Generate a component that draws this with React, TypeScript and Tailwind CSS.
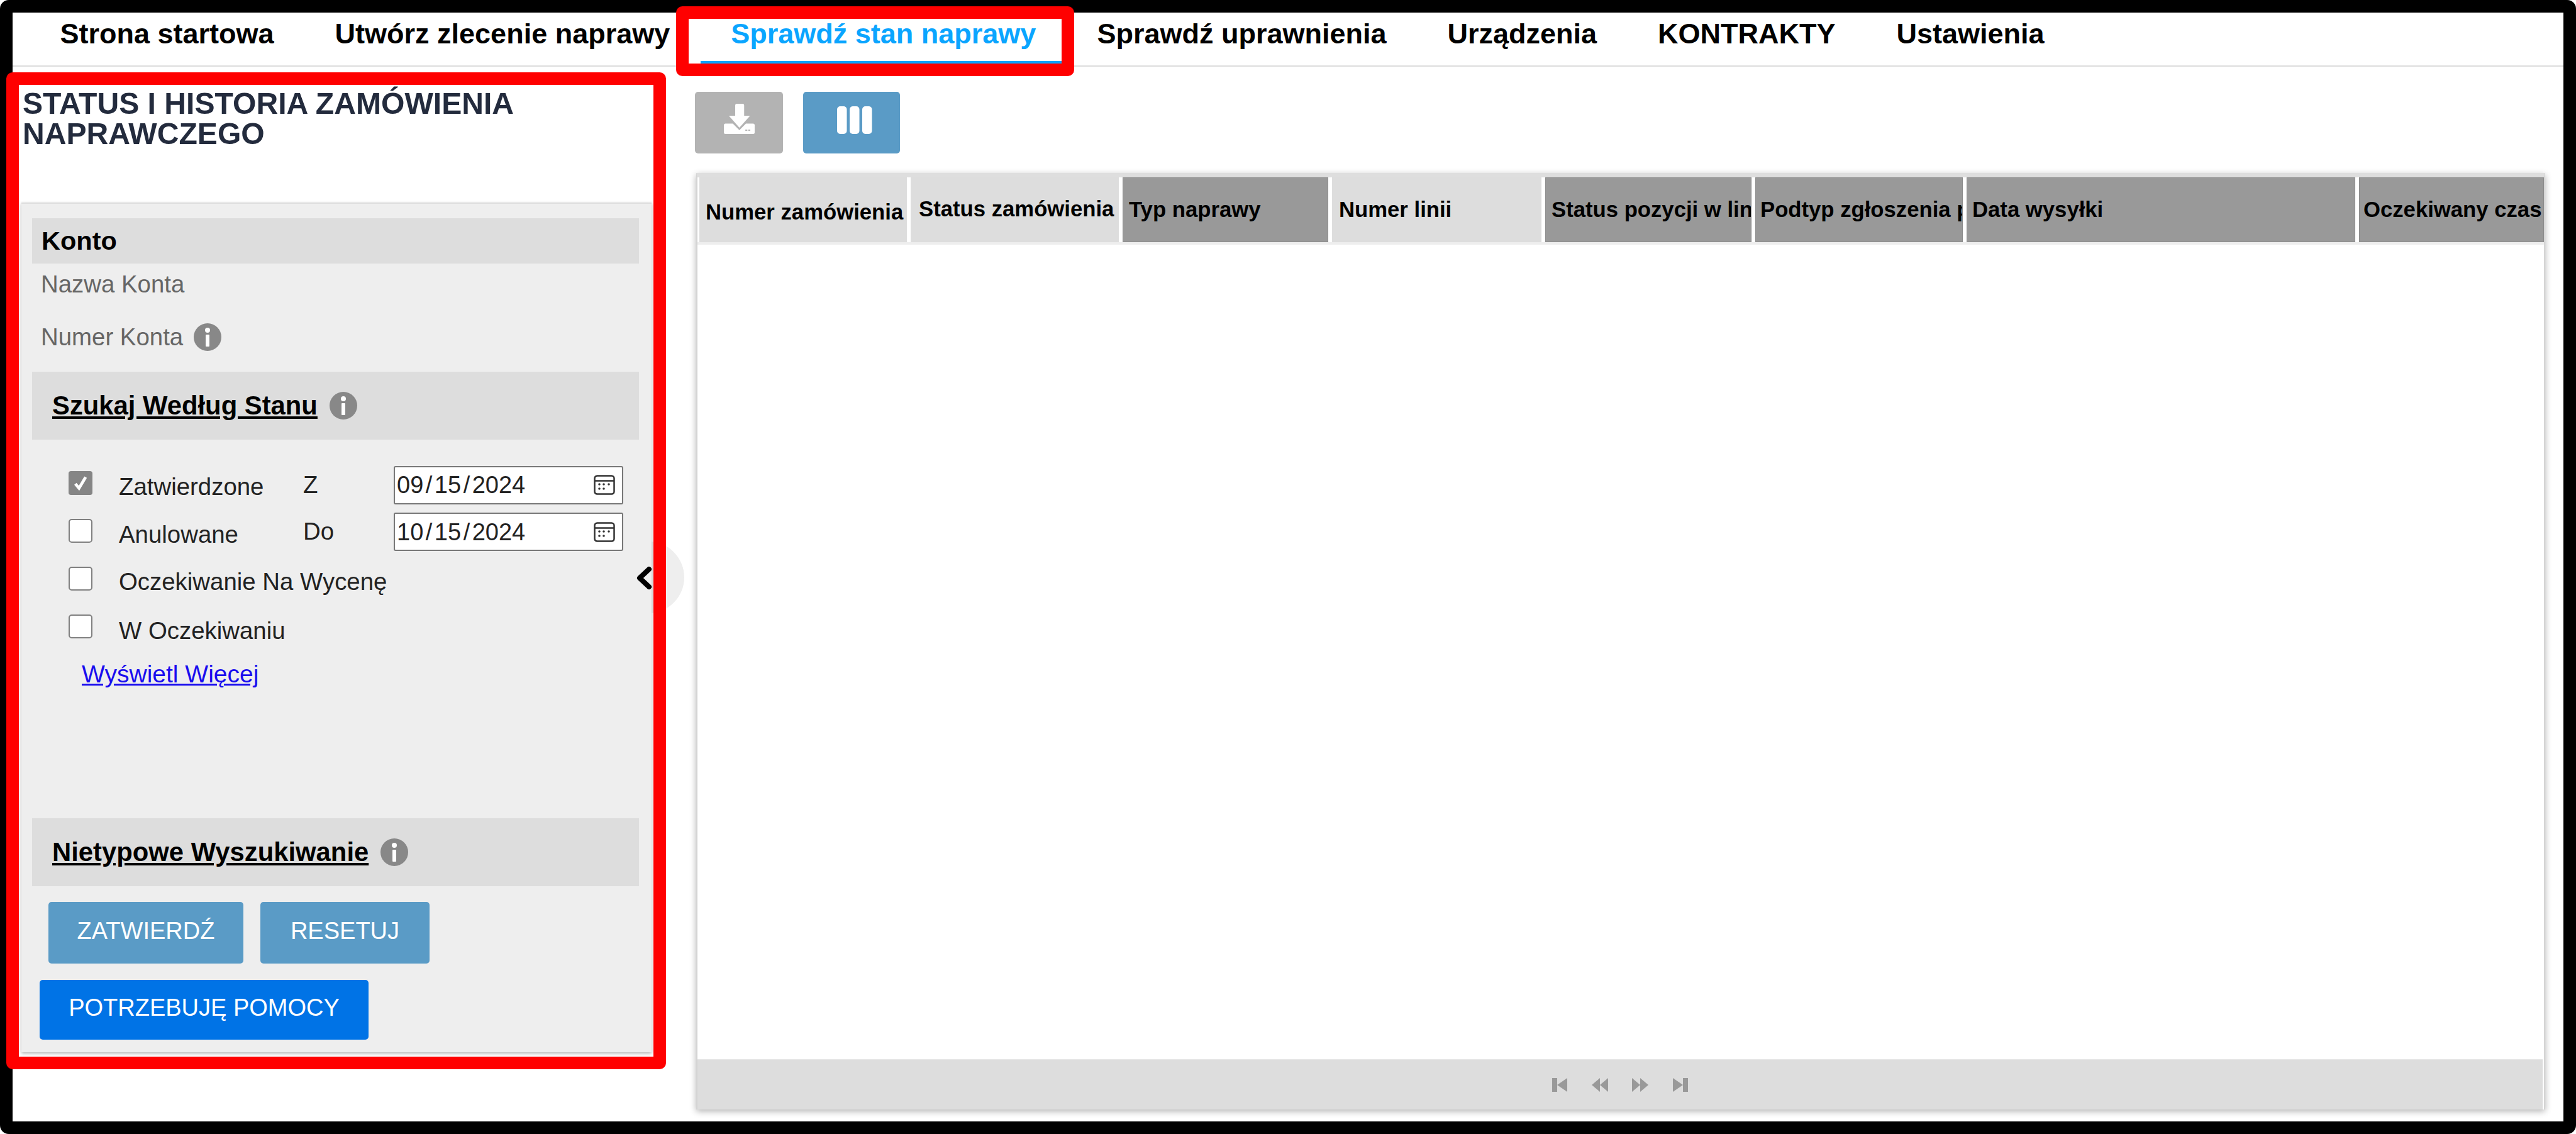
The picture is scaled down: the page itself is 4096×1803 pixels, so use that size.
const navItems = [
  "Strona startowa",
  "Utwórz zlecenie naprawy",
  "Sprawdź stan naprawy",
  "Sprawdź uprawnienia",
  "Urządzenia",
  "KONTRAKTY",
  "Ustawienia",
];

const columns = [
  { label: "Numer zamówienia", box: "w-[330px] bg-[#dddddd] pl-[10px] pt-[8px]" },
  { label: "Status zamówienia", box: "w-[331px] bg-[#dddddd] pl-[13px] pb-[2px]" },
  { label: "Typ naprawy", box: "w-[327px] bg-[#999999] border border-[#8c8c8c] pl-[9px]" },
  { label: "Numer linii", box: "w-[333px] bg-[#dddddd] pl-[11px]" },
  { label: "Status pozycji w linii", box: "w-[328px] bg-[#999999] border border-[#8c8c8c] pl-[9px]" },
  { label: "Podtyp zgłoszenia pozycji", box: "w-[330px] bg-[#999999] border border-[#8c8c8c] pl-[7px]" },
  { label: "Data wysyłki", box: "w-[618px] bg-[#999999] border border-[#8c8c8c] pl-[8px]" },
  { label: "Oczekiwany czas dostawy", box: "w-[294px] bg-[#999999] border border-[#8c8c8c] pl-[6px]" },
];

function InfoIcon() {
  return (
    <svg viewBox="0 0 44 44" className="w-[44px] h-[44px] shrink-0">
      <circle cx="22" cy="22" r="22" fill="#888888" />
      <circle cx="22" cy="11" r="4" fill="#ffffff" />
      <rect x="19" y="18" width="6" height="19" rx="1" fill="#ffffff" />
    </svg>
  );
}

function CalendarIcon() {
  return (
    <svg viewBox="0 0 34 32" className="w-[34px] h-[32px] shrink-0" fill="none">
      <rect x="1.5" y="1.5" width="31" height="29" rx="4" stroke="#333333" strokeWidth="2.5" />
      <path d="M1.5 9.5h31" stroke="#333333" strokeWidth="2.5" />
      <g fill="#333333">
        <circle cx="9" cy="15" r="1.8" />
        <circle cx="16" cy="15" r="1.8" />
        <circle cx="24" cy="15" r="1.8" />
        <circle cx="9" cy="22" r="1.8" />
        <circle cx="16" cy="22" r="1.8" />
      </g>
    </svg>
  );
}

function Checkbox({ checked }: { checked?: boolean }) {
  if (checked) {
    return (
      <span className="w-[38px] h-[38px] shrink-0 rounded-[4px] bg-[#858585] flex items-center justify-center">
        <svg viewBox="0 0 24 24" className="w-[28px] h-[28px]" fill="none">
          <path d="M5 13l5 6L19 4" stroke="#ffffff" strokeWidth="4" />
        </svg>
      </span>
    );
  }
  return <span className="w-[38px] h-[38px] shrink-0 rounded-[5px] bg-white border-2 border-[#808080]" />;
}

function DateField({ value, className }: { value: string; className: string }) {
  const [month, day, year] = value.split("/");
  return (
    <div className={`w-[365px] h-[61px] bg-white border-2 border-[#777777] rounded-[3px] flex items-center justify-between pl-[3px] pr-[11px] text-[38px] text-[#222222] ${className}`}>
      <span>
        {month}
        <span className="mx-[3.5px]">/</span>
        {day}
        <span className="mx-[3.5px]">/</span>
        {year}
      </span>
      <CalendarIcon />
    </div>
  );
}

function PagerIcon({ d }: { d: string }) {
  return (
    <svg viewBox="0 0 26 24" className="w-[26px] h-[24px]" fill="#999999">
      <path d={d} />
    </svg>
  );
}

export default function App() {
  return (
    <div className="relative w-[4096px] h-[1803px] bg-white border-[20px] border-black rounded-[14px] font-['Liberation_Sans',Arial,sans-serif] text-black">
      {/* Top nav */}
      <nav className="flex h-[86px] pl-[27px] border-b-2 border-[#dddddd] text-[45px] leading-[52px] font-bold whitespace-nowrap">
        {navItems.map((item) =>
          item === "Sprawdź stan naprawy" ? (
            <div key={item} className="px-[48.5px] pt-[8px] h-[86px] border-b-[9px] border-[#0aa5ff] text-[#0aa5ff]">
              {item}
            </div>
          ) : (
            <div key={item} className="px-[48.5px] pt-[8px]">
              {item}
            </div>
          )
        )}
      </nav>

      <div className="relative flex">
        {/* Left panel */}
        <aside className="relative w-[1002px] ml-[14px] shrink-0">
          <div className="h-[216px] pt-[34px] pl-[2px] text-[48.1px] leading-[48px] font-bold text-[#232b3d]">
            STATUS I HISTORIA ZAMÓWIENIA
            <br />
            NAPRAWCZEGO
          </div>

          {/* Collapse handle */}
          <div className="absolute left-[940px] top-[755px] w-[114px] h-[114px] rounded-full bg-[#eeeeee]" />

          <div className="relative h-[1351px] bg-[#eeeeee] border-t-2 border-[#dddddd] pt-[23px] pl-[17px] pr-[20px] shadow-[0_2px_5px_rgba(0,0,0,0.3)]">
            <div className="h-[72px] bg-[#dddddd] pl-[15px] flex items-center text-[41.5px] font-bold">Konto</div>
            <div className="mt-[11px] ml-[14px] text-[38.4px] leading-[44px] text-[#666666]">Nazwa Konta</div>
            <div className="mt-[40px] ml-[14px] flex items-center gap-[17px] text-[38.4px] leading-[44px] text-[#666666]">
              Numer Konta
              <InfoIcon />
            </div>

            <div className="mt-[33px] h-[108px] bg-[#dddddd] pl-[32px] flex items-center gap-[19px] text-[41.8px] font-bold">
              <span className="underline">Szukaj Według Stanu</span>
              <InfoIcon />
            </div>

            {/* Status filters */}
            <div className="mt-[30px] pl-[58px] text-[38.4px] leading-[44px] text-[#222222]">
              <div className="flex items-center h-[77px]">
                <Checkbox checked />
                <span className="ml-[42px] w-[293px] pt-[12px]">Zatwierdzone</span>
                <span className="w-[144px] pt-[6px]">Z</span>
                <DateField value="09/15/2024" className="mt-[7px]" />
              </div>
              <div className="flex items-center h-[76px]">
                <Checkbox />
                <span className="ml-[42px] w-[293px] pt-[12px]">Anulowane</span>
                <span className="w-[144px] pt-[2px]">Do</span>
                <DateField value="10/15/2024" className="mt-[3px]" />
              </div>
              <div className="flex items-center h-[76px]">
                <Checkbox />
                <span className="ml-[42px] pt-[10px]">Oczekiwanie Na Wycenę</span>
              </div>
              <div className="flex items-center h-[76px]">
                <Checkbox />
                <span className="ml-[42px] pt-[14px]">W Oczekiwaniu</span>
              </div>
            </div>

            <a className="block mt-[16px] ml-[79px] text-[39px] leading-[44px] text-[#1a0dee] underline">Wyświetl Więcej</a>

            <div className="mt-[207px] h-[108px] bg-[#dddddd] pl-[32px] flex items-center gap-[19px] text-[41.8px] font-bold">
              <span className="underline">Nietypowe Wyszukiwanie</span>
              <InfoIcon />
            </div>

            <div className="mt-[25px] ml-[26px] flex gap-[27px] text-[38px] text-white">
              <button className="w-[310px] h-[98px] rounded-[5px] bg-[#5a9bc6] pb-[6px]">ZATWIERDŹ</button>
              <button className="w-[269px] h-[98px] rounded-[5px] bg-[#5a9bc6] pb-[6px]">RESETUJ</button>
            </div>
            <button className="block mt-[26px] ml-[12px] w-[523px] h-[95px] rounded-[5px] bg-[#0073e6] text-[38px] text-white pb-[6px]">
              POTRZEBUJĘ POMOCY
            </button>
          </div>

          <svg viewBox="0 0 26 38" className="absolute left-[977px] top-[794px] w-[26px] h-[38px]" fill="none">
            <path d="M21 5L6 19l15 14" stroke="#000000" strokeWidth="8" strokeLinecap="round" strokeLinejoin="round" />
          </svg>
        </aside>

        {/* Results */}
        <main className="flex-1 min-w-0 pl-[69px] pr-[29px] pt-[40px]">
          <div className="flex gap-[32px]">
            <button className="w-[140px] h-[98px] rounded-[5px] bg-[#b3b3b3] flex items-center justify-center pb-[13px]">
              <svg viewBox="0 0 155 152" className="w-[49px] h-[48px]">
                <path d="M57 8q0-8 8-8h29q8 0 8 8v52h30L78 120 25 60h32z" fill="#ffffff" />
                <path d="M8 100h37l33 33 33-33h36q8 0 8 8v36q0 8-8 8H8q-8 0-8-8v-36q0-8 8-8z" fill="#ffffff" />
                <path d="M108 130h10v6h-10zM123 130h10v6h-10z" fill="#b3b3b3" />
              </svg>
            </button>
            <button className="w-[154px] h-[98px] rounded-[5px] bg-[#5a9bc6] flex items-center justify-center pl-[9px] pb-[8px]">
              <svg viewBox="0 0 56 44" className="w-[56px] h-[44px]" fill="#ffffff">
                <rect x="0" y="0" width="15.5" height="44" rx="5" />
                <rect x="20" y="0" width="15.5" height="44" rx="5" />
                <rect x="40" y="0" width="15.5" height="44" rx="5" />
              </svg>
            </button>
          </div>

          <div className="mt-[31px] ml-[2px] h-[1489px] flex flex-col bg-white border-t-[7px] border-t-[#dedede] border-x-2 border-x-[#d4d4d4] shadow-[0_3px_10px_rgba(0,0,0,0.3)]">
            <div className="flex gap-[6px] pl-[3px] h-[107px] shrink-0 border-b-4 border-[#eeeeee] text-[34.7px] font-bold">
              {columns.map((col) => (
                <div key={col.label} className={`flex items-center overflow-hidden whitespace-nowrap shrink-0 h-[103px] ${col.box}`}>
                  {col.label}
                </div>
              ))}
            </div>
            <div className="flex-1" />
            <div className="h-[80px] mr-[2px] bg-[#dddddd] border-t border-[#e6e6e6] flex items-center justify-center gap-[38px] shrink-0">
              <PagerIcon d="M1 1h8v22H1zM25 1v22L9 12z" />
              <PagerIcon d="M0 12L13 1v22zM13 12L26 1v22z" />
              <PagerIcon d="M0 1l13 11L0 23zM13 1l13 11-13 11z" />
              <PagerIcon d="M1 1l16 11L1 23zM17 1h8v22h-8z" />
            </div>
          </div>
        </main>
      </div>

      {/* Red annotation boxes over the page */}
      <div className="absolute left-[1055px] top-[-10px] w-[633px] h-[111px] border-[20px] border-[#ff0000] rounded-[10px]" />
      <div className="absolute left-[-10px] top-[95px] w-[1049px] h-[1585px] border-[20px] border-[#ff0000] rounded-[10px]" />
    </div>
  );
}
